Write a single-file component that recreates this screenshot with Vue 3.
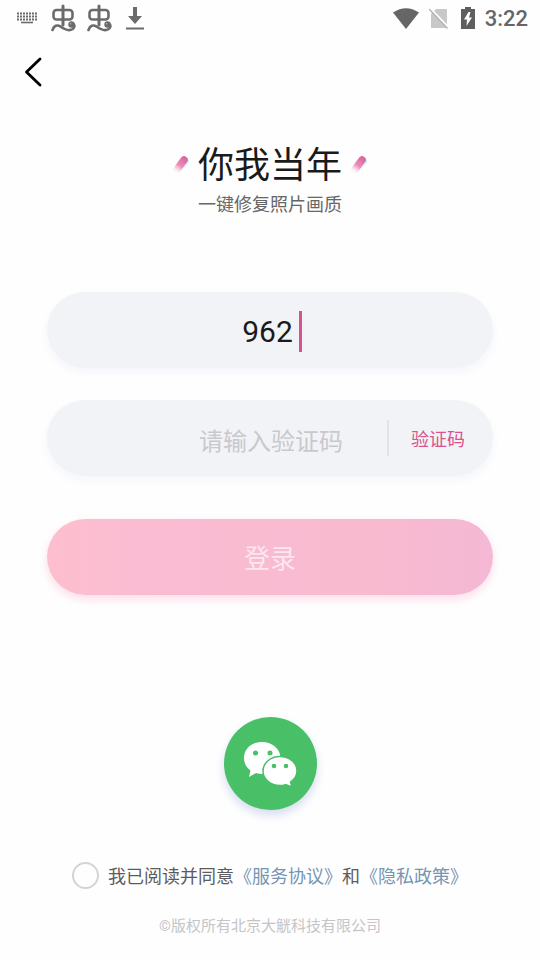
<script setup>
import { ref } from 'vue'

const phone = ref('962')
const code = ref('')
const agreed = ref(false)
</script>

<template>
  <div class="screen" lang="zh-CN">
    <header class="status">
      <div class="status-group left">
        <svg class="keyboard" width="22" height="12" viewBox="0 0 22 12" aria-hidden="true">
          <path d="M0 1.500h21M0 4.500h21M0 7.500h21" stroke="#6b6b6b" stroke-width="1.800" stroke-dasharray="2 1" />
          <path d="M4 10.500h12" stroke="#6b6b6b" stroke-width="1.600" />
        </svg>
        <svg v-for="n in 2" :key="n" width="26" height="28" viewBox="0 0 26 28" fill="none" stroke="#6b6b6b" stroke-linecap="round" aria-hidden="true">
          <rect x="2.500" y="6" width="19" height="9.500" rx="3" stroke-width="2.600" />
          <path d="M12 2v19" stroke-width="3" />
          <path d="M1.500 26C3 21.500 6 20.500 9.500 22.500C13 25 16 26.500 19 26C23.500 25.500 24.500 21 22 19.500" stroke-width="2.600" />
          <circle cx="20.500" cy="20.500" r="3.200" fill="#6b6b6b" stroke="none" />
          <circle cx="19.600" cy="19.800" r="0.800" fill="#b5b5b5" stroke="none" />
        </svg>
        <svg class="download" width="18" height="24" viewBox="0 0 18 24" aria-hidden="true">
          <path d="M7 1h4v9h5l-7 8-7-8h5z" fill="#6b6b6b" />
          <path d="M0 22.500h18" stroke="#6b6b6b" stroke-width="2" />
        </svg>
      </div>
      <div class="status-group right">
        <svg width="26" height="21" viewBox="0 0 26 21" aria-hidden="true">
          <path d="M0 4.500Q13-4 26 4.500L13 21z" fill="#666" />
        </svg>
        <svg class="sim" width="20" height="21" viewBox="0 0 20 21" aria-hidden="true">
          <path d="M7 1h10q1 0 1 1v18H2V6z" fill="#c8c8c8" />
          <path d="M1 0l18 19" stroke="#fefefe" stroke-width="2" />
          <path d="M0 1l18.500 19.500" stroke="#b5b5b5" stroke-width="1.500" />
        </svg>
        <svg class="battery" width="14" height="22" viewBox="0 0 14 22" aria-hidden="true">
          <path d="M4 0h6v2h4v20H0V2h4z" fill="#5f5f5f" />
          <path d="M7.500 5L3 12.500h3L5.500 19 11 10.500H8L9.500 5z" fill="#fff" />
        </svg>
        <time class="clock">3:22</time>
      </div>
    </header>

    <nav class="nav">
      <button class="back" type="button" aria-label="返回">
        <svg width="18" height="30" viewBox="0 0 18 30" fill="none" stroke="#000" stroke-width="2.800" stroke-linecap="round" stroke-linejoin="round" aria-hidden="true">
          <path d="M16 2L2.500 15 16 28" />
        </svg>
      </button>
    </nav>

    <main class="content">
      <div class="brand">
        <svg v-for="side in ['before', 'after']" :key="side" :class="side" width="18" height="20" viewBox="0 0 18 20" aria-hidden="true">
          <defs>
            <linearGradient :id="'spark-' + side" x1="14" y1="1" x2="4" y2="16" gradientUnits="userSpaceOnUse">
              <stop offset="0" stop-color="#d9609a" />
              <stop offset="0.600" stop-color="#ea91b8" />
              <stop offset="1" stop-color="#fbe0ec" stop-opacity="0.200" />
            </linearGradient>
            <linearGradient :id="'glow-' + side" x1="14" y1="4" x2="7" y2="14" gradientUnits="userSpaceOnUse">
              <stop offset="0" stop-color="#c9f5f4" />
              <stop offset="1" stop-color="#eafafa" stop-opacity="0" />
            </linearGradient>
          </defs>
          <path d="M13.500 5.500L8 13.500" :stroke="`url(#glow-${side})`" stroke-width="7" stroke-linecap="round" />
          <path d="M12 4L5 13.500" :stroke="`url(#spark-${side})`" stroke-width="7.500" stroke-linecap="round" />
        </svg>
        <h1>你我当年</h1>
      </div>
      <p class="tagline">一键修复照片画质</p>

      <form class="form" @submit.prevent>
        <label class="field phone">
          <input v-model="phone" type="tel" aria-label="手机号" />
          <span class="caret"></span>
        </label>
        <div class="field code">
          <input v-model="code" type="text" placeholder="请输入验证码" aria-label="验证码" />
          <button class="send" type="button">验证码</button>
        </div>
        <button class="login" type="submit">登录</button>
      </form>

      <button class="wechat" type="button" aria-label="微信登录">
        <svg width="54" height="46" viewBox="0 0 54 46" aria-hidden="true">
          <path d="M19 1C8.500 1 1 8 1 17c0 5.500 2.500 9.500 6.500 12.500L6 36l7-4c2 .600 4 1 6 1 10.500 0 18.500-7 18.500-16S29.500 1 19 1z" fill="#fff" />
          <path d="M37 15.500c-9.500 0-17 6.500-17 14.500s7.500 14.500 17 14.500c2 0 4-.300 5.500-.900L49 46l-1.500-5c4-2.700 6.500-6.500 6.500-11 0-8-7.500-14.500-17-14.500z" fill="#fff" stroke="#49bf68" stroke-width="1.500" />
          <g fill="#49bf68">
            <circle cx="12.500" cy="12" r="2.500" />
            <circle cx="27" cy="12" r="2.500" />
            <circle cx="31" cy="25" r="2.300" />
            <circle cx="43" cy="25" r="2.300" />
          </g>
        </svg>
      </button>

      <div class="terms">
        <input id="agree" v-model="agreed" type="checkbox" />
        <p><label for="agree">我已阅读并同意</label><a href="#service">《服务协议》</a>和<a href="#privacy">《隐私政策》</a></p>
      </div>
    </main>
    <footer class="copyright">©版权所有北京大觥科技有限公司</footer>
  </div>
</template>

<style>
body {
  margin: 0;
  background: #fefefe;
}
</style>

<style scoped>
.screen {
  min-height: 100vh;
  box-sizing: border-box;
  display: flex;
  flex-direction: column;
  padding-bottom: 22px;
  font-family: Roboto, "Noto Sans CJK SC", sans-serif;
  color: #1a1a1a;
}
button, input {
  font-family: inherit;
  border: 0;
  padding: 0;
  margin: 0;
  background: none;
}
button {
  cursor: pointer;
}
svg {
  display: block;
  flex: none;
}
.status {
  height: 36px;
  display: flex;
  justify-content: space-between;
  padding: 0 12px 0 17px;
}
.status-group {
  display: flex;
  align-items: center;
  gap: 10px;
}
.keyboard {
  margin-right: 2px;
}
.download {
  margin-left: 3px;
}
.clock {
  font-size: 22px;
  font-weight: 500;
  line-height: 36px;
  padding-top: 2px;
  color: #666;
}
.sim {
  margin-right: 2px;
}
.nav {
  height: 72px;
  display: flex;
  align-items: center;
  padding-left: 24px;
}
.content {
  display: flex;
  flex-direction: column;
  align-items: center;
  padding: 34px 47px 0;
}
.brand {
  display: flex;
  justify-content: center;
  align-items: center;
  gap: 8px;
}
.before {
  order: -1;
}
.after {
  order: 1;
}
h1 {
  margin: 0;
  font-size: 36px;
  font-weight: 400;
  line-height: 48px;
}
.tagline {
  margin: 0;
  font-size: 18px;
  line-height: 30px;
  color: #666;
}
.form {
  width: 100%;
  margin-top: 72px;
  display: flex;
  flex-direction: column;
}
.field {
  height: 76px;
  box-sizing: border-box;
  border-radius: 38px;
  background: #f2f3f7;
  box-shadow: 0 4px 10px #f4f5fb;
  display: flex;
  align-items: center;
}
.field input {
  outline: none;
  color: #1a1a1a;
  text-align: center;
}
.phone {
  justify-content: center;
  gap: 6px;
  padding: 2px 0 0 4px;
}
.phone input {
  field-sizing: content;
  font-size: 30px;
  line-height: 40px;
  padding-top: 2px;
  caret-color: transparent;
}
.caret {
  width: 3px;
  height: 41px;
  background: #d4558c;
}
.code {
  margin-top: 32px;
  padding-left: 108px;
}
.code input {
  flex: 1;
  min-width: 0;
  font-size: 24px;
  line-height: 36px;
  padding-top: 8px;
}
.code input::placeholder {
  color: #c8c9cd;
  opacity: 1;
}
.send {
  flex: none;
  height: 36px;
  padding: 0 28px 0 22px;
  border-left: 2px solid #e2e3e7;
  font-size: 18px;
  color: #d9538d;
}
.login {
  height: 76px;
  margin-top: 43px;
  padding-bottom: 2px;
  border-radius: 38px;
  background: linear-gradient(90deg, #fdbfce, #fabcd2 20%, #f7bacf 75%, #f5b8d5);
  box-shadow: 0 4px 10px #fcdce9;
  font-size: 26px;
  color: #fde6ef;
}
.wechat {
  width: 93px;
  height: 93px;
  margin-top: 122px;
  border-radius: 50%;
  display: flex;
  justify-content: center;
  align-items: center;
  background: #49bf68;
  box-shadow: 0 5px 10px #d5dcef;
}
.terms {
  width: 100%;
  box-sizing: border-box;
  padding-left: 25px;
  margin-top: 47px;
  display: flex;
  align-items: center;
  gap: 9px;
  font-family: "Noto Sans CJK SC", sans-serif;
  font-size: 18px;
  line-height: 36px;
  color: #5c5c5c;
  white-space: nowrap;
}
.terms p {
  margin: 0;
}
.terms input {
  appearance: none;
  width: 27px;
  height: 27px;
  box-sizing: border-box;
  border: 2px solid #d4d4d4;
  border-radius: 50%;
}
.terms input:checked {
  background: #d9538d;
}
a {
  color: #7595b3;
  text-decoration: none;
}
.copyright {
  margin-top: auto;
  font-size: 15px;
  line-height: 24px;
  color: #c5c5c7;
  text-align: center;
}
</style>
